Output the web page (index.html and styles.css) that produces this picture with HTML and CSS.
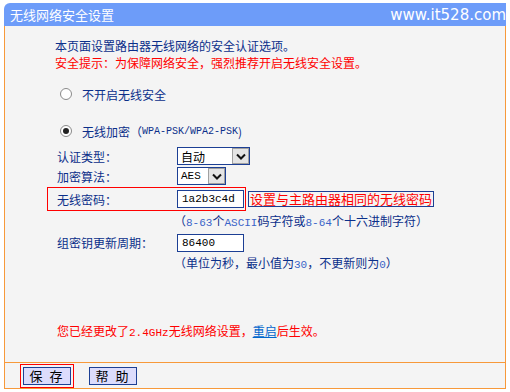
FILE: index.html
```html
<!DOCTYPE html>
<html lang="zh-CN">
<head>
    <meta charset="UTF-8">
    <meta name="viewport" content="width=device-width, initial-scale=1.0">
    <title>无线网络安全设置</title>
    <link rel="stylesheet" href="styles.css">
</head>
<body>
    <div class="panel">
        <div class="title">
            <span class="title-text">无线网络安全设置</span>
            <span class="site">www.it528.com</span>
        </div>

        <div class="content">
            <p class="intro">
                本页面设置路由器无线网络的安全认证选项。<br>
                <span class="warn">安全提示：为保障网络安全，强烈推荐开启无线安全设置。</span>
            </p>

            <div class="radio-row first"><span class="radio"></span>不开启无线安全</div>
            <div class="radio-row second"><span class="radio checked"></span>无线加密（<span class="mono">WPA-PSK/WPA2-PSK</span>)</div>

            <div class="field">
                <label>认证类型：</label>
                <div class="select wide">
                    <span class="select-value">自动</span>
                    <span class="arrow"><svg width="10" height="7" viewBox="0 0 10 7"><path d="M1 1.5 L5 5.5 L9 1.5" fill="none" stroke="#111" stroke-width="2"/></svg></span>
                </div>
            </div>

            <div class="field">
                <label>加密算法：</label>
                <div class="select narrow">
                    <span class="select-value mono">AES</span>
                    <span class="arrow"><svg width="10" height="7" viewBox="0 0 10 7"><path d="M1 1.5 L5 5.5 L9 1.5" fill="none" stroke="#111" stroke-width="2"/></svg></span>
                </div>
            </div>

            <div class="field password">
                <div class="mark">
                    <label>无线密码：</label>
                    <input type="text" class="text-input" value="1a2b3c4d">
                </div>
                <span class="note">设置与主路由器相同的无线密码</span>
            </div>
            <div class="hint">（<span class="mono light">8-63</span>个<span class="mono light">ASCII</span>码字符或<span class="mono light">8-64</span>个十六进制字符）</div>

            <div class="field group-key">
                <label>组密钥更新周期：</label>
                <input type="text" class="text-input" value="86400">
            </div>
            <div class="hint">（单位为秒，最小值为<span class="mono light">30</span>，不更新则为<span class="mono light">0</span>）</div>

            <p class="reboot">您已经更改了<span class="mono">2.4GHz</span>无线网络设置，<a href="#">重启</a>后生效。</p>
        </div>

        <div class="footer">
            <span class="focus"><button class="btn">保 存</button></span>
            <button class="btn">帮 助</button>
        </div>
    </div>
</body>
</html>
```

FILE: styles.css
```css
body {
    margin: 0;
    padding: 0;
    background-color: #fff;
    font-family: "Noto Sans CJK SC", "Liberation Sans", sans-serif;
    font-size: 12px;
    color: #0b2f8a;
}

.panel {
    width: 502px;
    margin: 3px 0 0 4px;
}

.title {
    height: 23px;
    display: flex;
    align-items: center;
    justify-content: space-between;
    padding-left: 6px;
    background-color: #6d9cf9;
    border-top-left-radius: 6px;
    color: #fff;
}

.title-text {
    font-size: 13px;
}

.site {
    font-family: "DejaVu Sans", sans-serif;
    font-size: 15px;
}

.content {
    height: 336px;
    padding-top: 11px;
    box-sizing: border-box;
    background-color: #f4f4f4;
    border-left: 1px solid #f7993a;
    border-right: 1px solid #f7993a;
}

.intro {
    margin: 0;
    padding-left: 50px;
    line-height: 17px;
}

.warn {
    color: #f00;
}

.mono {
    font-family: "Liberation Mono", monospace;
    font-size: 11px;
}

.radio-row .mono {
    font-size: 10px;
}

.light {
    color: #3a64c8;
}

.radio-row {
    height: 18px;
    display: flex;
    align-items: center;
    padding-left: 55px;
}

.radio-row.first {
    margin-top: 14px;
}

.radio-row.second {
    margin-top: 19px;
}

.radio {
    width: 10px;
    height: 10px;
    margin-right: 10px;
    border: 1px solid #8a8a8a;
    border-radius: 50%;
    background-color: #fff;
    position: relative;
}

.radio.checked::after {
    content: "";
    position: absolute;
    left: 2px;
    top: 2px;
    width: 6px;
    height: 6px;
    border-radius: 50%;
    background-color: #222;
}

.field {
    height: 20px;
    display: flex;
    align-items: center;
    padding-left: 52px;
}

.radio-row.second + .field {
    margin-top: 6px;
}

.field label {
    width: 120px;
}

.select {
    height: 18px;
    box-sizing: border-box;
    display: flex;
    align-items: center;
    justify-content: space-between;
    border: 1px solid #1c3f94;
    background-color: #fff;
    color: #000;
}

.select.wide {
    width: 73px;
}

.select.narrow {
    width: 49px;
}

.select-value {
    padding-left: 3px;
}

.arrow {
    width: 17px;
    height: 16px;
    box-sizing: border-box;
    display: flex;
    align-items: center;
    justify-content: center;
    border: 1px solid #a0a0a0;
    background-color: #e4e4e4;
}

.text-input {
    width: 67px;
    height: 18px;
    box-sizing: border-box;
    margin: 0;
    padding: 0 4px;
    border: 1px solid #1c3f94;
    background-color: #fff;
    font-family: "Liberation Mono", monospace;
    font-size: 11px;
    color: #000;
    outline: none;
}

.field.password {
    height: 24px;
    margin-top: 1px;
    padding-left: 42px;
}

.mark {
    height: 24px;
    box-sizing: border-box;
    display: flex;
    align-items: center;
    padding: 0 1px 0 9px;
    border: 1px solid #f00;
}

.note {
    margin-left: 2px;
    padding: 0 1px;
    border: 1px solid #1c3f94;
    color: #f00;
    font-size: 13px;
    line-height: 14px;
}

.hint {
    height: 20px;
    line-height: 20px;
    padding-left: 169px;
}

.field.group-key {
    height: 21px;
    margin-top: 1px;
}

.reboot {
    margin: 49px 0 0;
    padding-left: 52px;
    line-height: 18px;
    color: #f00;
}

.reboot a {
    color: #0066cc;
}

.footer {
    height: 25px;
    display: flex;
    align-items: center;
    gap: 15px;
    padding-left: 15px;
    background-color: #f4f4f4;
    border: 1px solid #f7993a;
}

.focus {
    display: flex;
    padding: 2px;
    border: 1px solid #f00;
}

.btn {
    width: 48px;
    height: 18px;
    margin: 0;
    padding: 0;
    border: 1px solid #1c3f94;
    background-color: #dcdcfc;
    font-family: "Noto Sans CJK SC", sans-serif;
    font-size: 13px;
    color: #000;
    line-height: 16px;
    letter-spacing: 2px;
}
```
